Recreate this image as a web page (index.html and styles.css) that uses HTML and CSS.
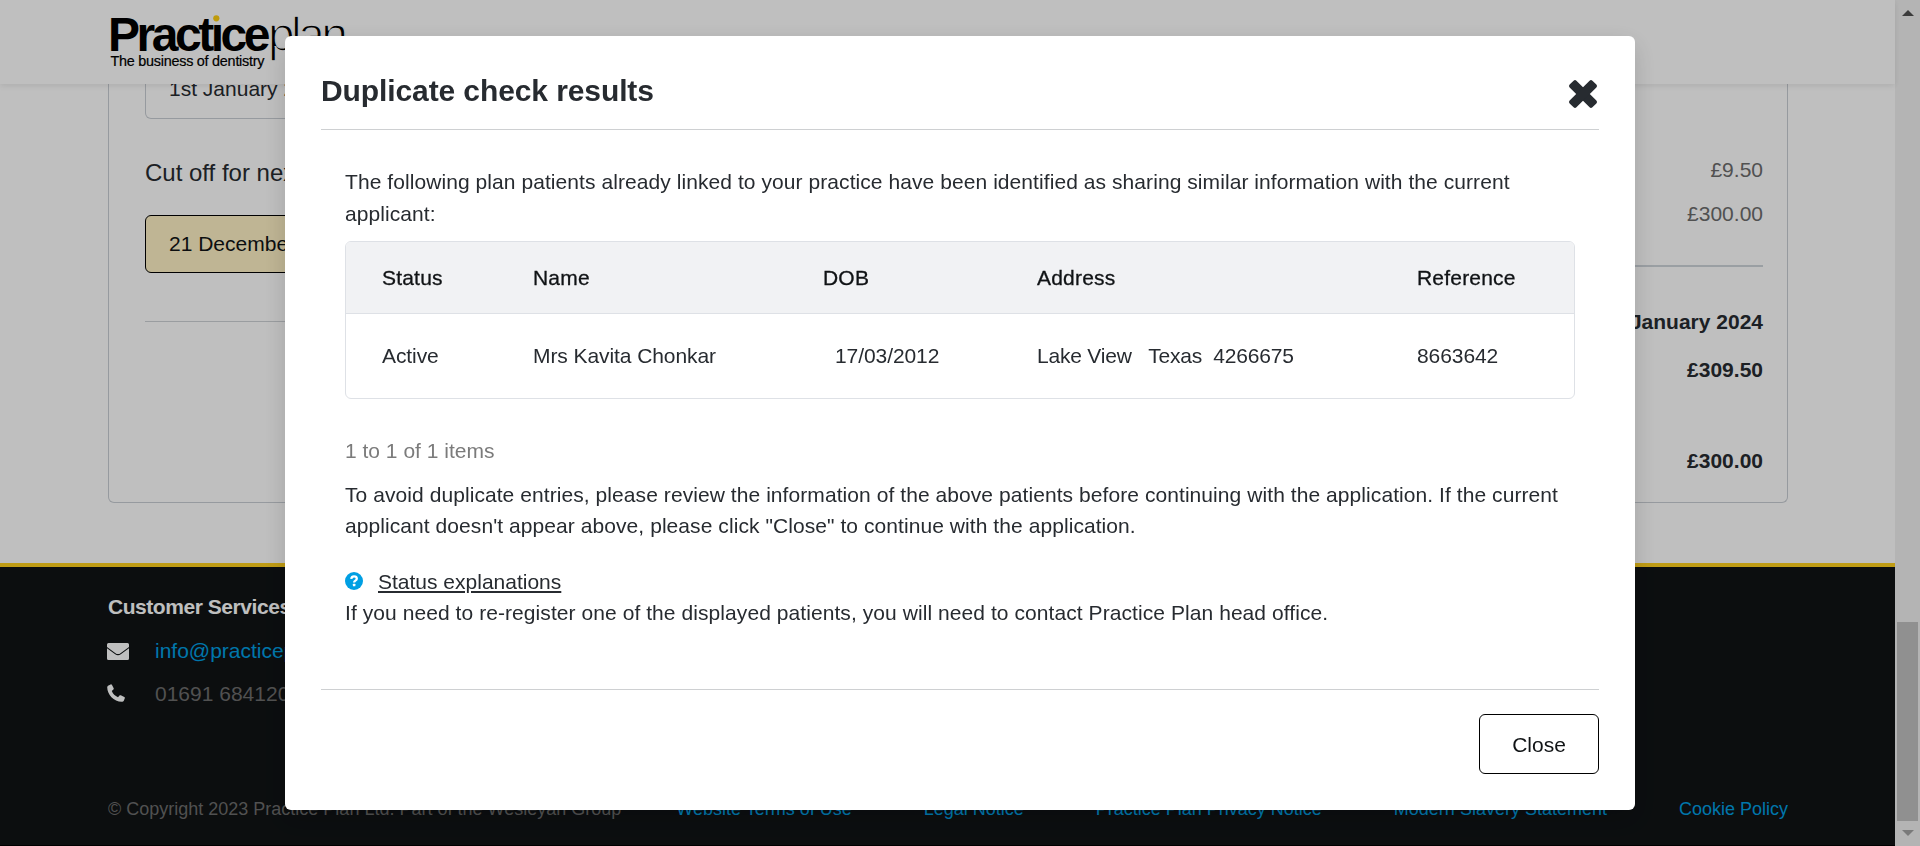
FILE: index.html
```html
<!DOCTYPE html>
<html lang="en">
<head>
<meta charset="utf-8">
<title>Duplicate check results</title>
<link rel="stylesheet" href="styles.css">
</head>
<body>
<div class="page">
  <div class="content">
    <header class="site-header">
      <svg class="logo" width="260" height="84" viewBox="0 0 260 84" role="img" aria-label="Practiceplan">
        <text class="logo-bold" x="0" y="51" textLength="162.500" lengthAdjust="spacing">Practıce</text>
        <circle cx="108.300" cy="18.300" r="3.100" fill="#ffcf10"/>
        <text class="logo-thin" x="160" y="51" textLength="80" lengthAdjust="spacing">plan</text>
        <text class="logo-tag" x="2.500" y="66.300" textLength="154" lengthAdjust="spacing">The business of dentistry</text>
      </svg>
    </header>
    <main class="main">
      <section class="card">
        <div class="dates">
          <div class="date-box">1st January 2024</div>
          <h2 class="dates-title">Cut off for next collection</h2>
          <div class="date-box date-box-active">21 December 2023</div>
          <hr class="rule">
        </div>
        <div class="totals">
          <div class="amount first">£9.50</div>
          <div class="amount second">£300.00</div>
          <hr class="rule-thick">
          <div class="strong month">1 January 2024</div>
          <div class="strong total">£309.50</div>
          <div class="strong">£300.00</div>
        </div>
      </section>
    </main>
    <footer class="footer">
      <h3 class="footer-title">Customer Services</h3>
      <div class="contact">
        <svg class="contact-icon mail-icon" width="22" height="17" viewBox="0 0 22 17"><path fill="#fff" d="M1.500 0h19A1.500 1.500 0 0 1 22 1.500V4l-8.500 6.200c-1.500 1.200-3.500 1.200-5 0L0 4V1.500A1.500 1.500 0 0 1 1.500 0zM0 5.200l8.200 6c1.800 1.300 3.800 1.300 5.600 0l8.200-6v10.300a1.500 1.500 0 0 1-1.500 1.500h-19A1.500 1.500 0 0 1 0 15.500z"/></svg>
        <a class="link">info@practiceplan.co.uk</a>
      </div>
      <div class="contact phone">
        <svg class="contact-icon" width="18" height="18" viewBox="0 0 18 18"><path fill="#fff" d="M1 1.700 3.600.4c.6-.3 1.100 0 1.400.5l1.700 3.400c.2.5.1 1-.3 1.300L4.800 7c1 2.700 3.300 5 6.200 6.200l1.500-1.700c.3-.4.900-.5 1.300-.2l3.500 1.700c.5.2.7.8.5 1.300l-1 2.400c-.4.8-1.200 1-2 1C6.600 17.700.3 10.500.2 3.200c0-.6.3-1.200.8-1.500z"/></svg>
        <span>01691 684120</span>
      </div>
      <div class="legal">
        <span>© Copyright 2023 Practice Plan Ltd. Part of the Wesleyan Group</span>
        <nav class="legal-links">
          <a class="link">Website Terms of Use</a>
          <a class="link">Legal Notice</a>
          <a class="link">Practice Plan Privacy Notice</a>
          <a class="link">Modern Slavery Statement</a>
          <a class="link">Cookie Policy</a>
        </nav>
      </div>
    </footer>
  </div>
  <div class="scrollbar">
    <i class="arrow arrow-up"></i>
    <i class="thumb"></i>
    <i class="arrow arrow-down"></i>
  </div>
</div>

<div class="backdrop">
  <div class="modal" role="dialog" aria-modal="true">
    <div class="modal-header">
      <h1 class="modal-title">Duplicate check results</h1>
      <svg class="modal-x" width="30" height="30" viewBox="0 0 30 30"><g fill="#272b30"><rect x="-1.100" y="10.200" width="32.200" height="9.600" rx="2" transform="rotate(45 15 15)"/><rect x="-1.100" y="10.200" width="32.200" height="9.600" rx="2" transform="rotate(-45 15 15)"/></g></svg>
    </div>
    <div class="modal-body">
      <p>The following plan patients already linked to your practice have been identified as sharing similar information with the current applicant:</p>
      <div class="table">
        <div class="row head"><span>Status</span><span>Name</span><span>DOB</span><span>Address</span><span>Reference</span></div>
        <div class="row"><span>Active</span><span>Mrs Kavita Chonkar</span><span class="dob">17/03/2012</span><span class="address">Lake View   Texas  4266675</span><span>8663642</span></div>
      </div>
      <p class="count">1 to 1 of 1 items</p>
      <p class="advice">To avoid duplicate entries, please review the information of the above patients before continuing with the application. If the current applicant doesn't appear above, please click "Close" to continue with the application.</p>
      <div class="explain">
        <svg width="18" height="18" viewBox="0 0 18 18"><circle cx="9" cy="9" r="9" fill="#009fe3"/><path d="M6.200 6.900C6.500 5.200 7.500 4.400 9 4.400c1.600 0 2.800.9 2.800 2.300 0 2-2.700 1.900-2.700 3.700" fill="none" stroke="#fff" stroke-width="2.300"/><rect x="7.900" y="11.700" width="2.500" height="2.500" rx=".5" fill="#fff"/></svg>
        <a class="explain-link">Status explanations</a>
      </div>
      <p>If you need to re-register one of the displayed patients, you will need to contact Practice Plan head office.</p>
    </div>
    <div class="modal-footer"><button class="close">Close</button></div>
  </div>
</div>
</body>
</html>
```

FILE: styles.css
```css
* { box-sizing: border-box; }
body, h1, h2, h3, p, hr { margin: 0; }
body {
  height: 846px;
  overflow: hidden;
  font: 21px/31.5px "Liberation Sans", Arial, sans-serif;
  color: #272b30;
  background: #fff;
}
.page { display: flex; height: 846px; }
.content { width: 1895px; display: flex; flex-direction: column; }

.site-header {
  height: 84px;
  padding-left: 108px;
  background: #fff;
  box-shadow: 0 2px 6px rgba(0, 0, 0, .09);
  z-index: 1;
}
.logo { display: block; }
.logo text { font-family: "Liberation Sans", Arial, sans-serif; fill: #000; }
.logo .logo-bold { font-size: 48px; font-weight: 700; }
.logo .logo-thin { font-size: 48px; stroke: #fff; stroke-width: 1.3px; }
.logo .logo-tag { font-size: 14.4px; stroke: #000; stroke-width: .2px; }

.main { height: 479px; padding: 0 107px 0 108px; }
.card {
  height: 419px;
  display: flex;
  justify-content: space-between;
  border: 1px solid #c9ced4;
  border-top: 0;
  border-radius: 0 0 6px 6px;
  padding: 0 24px 0 36px;
}
.dates { width: 500px; }
.date-box {
  height: 35px;
  padding: 0 23px;
  border: 1px solid #c9ced4;
  border-top: 0;
  border-radius: 0 0 6px 6px;
  line-height: 10px;
}
.dates-title { margin-top: 36px; font-size: 24px; line-height: 36px; font-weight: 400; }
.date-box-active {
  height: 58px;
  margin-top: 24px;
  border: 1px solid #000;
  border-radius: 6px;
  background: #fff2c6;
  color: #101315;
  line-height: 56px;
}
.date-box-active + .rule { margin-top: 48px; }
.rule { border: 0; border-top: 1px solid #ced2d6; }
.totals { width: 600px; text-align: right; }
.amount { color: #6c6c6c; }
.first { margin-top: 70px; }
.second { margin-top: 12.5px; }
.rule-thick { margin-top: 35px; border: 0; border-top: 2px solid #ced4da; }
.strong { font-weight: 700; }
.month { margin-top: 39px; }
.total { margin: 16.5px 0 59.5px; }

.footer {
  height: 283px;
  padding: 24px 107px 0 108px;
  border-top: 4px solid #ffd01d;
  border-bottom: 1px solid #000;
  background: #101315;
  color: #6c6c6c;
}
.footer-title { color: #fff; font-size: 21px; letter-spacing: -.45px; }
.contact { display: flex; align-items: center; margin-top: 12px; }
.contact-icon { margin: 0 26px 0 -1px; }
.mail-icon { margin-top: 3px; }
.phone { margin-top: 11.5px; }
.phone .contact-icon { margin-right: 30px; }
.link { color: #009fe3; }
.legal {
  display: flex;
  justify-content: space-between;
  margin-top: 87px;
  font-size: 18px;
  line-height: 27px;
  white-space: nowrap;
}
.legal-links { display: flex; gap: 72px; }

.scrollbar {
  width: 25px;
  padding: 8px 2px 10px;
  display: flex;
  flex-direction: column;
  align-items: center;
  background: #f1f1f1;
}
.arrow { border: 6px solid transparent; }
.arrow-up { border-top: 0; border-bottom-color: #505050; margin-top: 2px; }
.arrow-down { border-bottom: 0; border-top-color: #a3a3a3; margin-top: 9px; }
.thumb { width: 21px; height: 199px; margin-top: auto; background: #c1c1c1; }

.backdrop {
  position: fixed;
  inset: 0;
  z-index: 2;
  padding: 36px 285px;
  background: rgba(0, 0, 0, .25);
}
.modal {
  width: 1350px;
  height: 774px;
  padding: 0 36px;
  border-radius: 6px;
  background: #fff;
  box-shadow: 0 8px 24px rgba(0, 0, 0, .15);
}
.modal-header {
  height: 94px;
  display: flex;
  justify-content: space-between;
  align-items: flex-start;
  padding-top: 32px;
  border-bottom: 1px solid #ced0d2;
}
.modal-title { font-size: 30px; line-height: 45px; letter-spacing: -.1px; }
.modal-x { margin: 11px 1px 0 0; }
.modal-body { height: 560px; padding: 36px 24px 0; border-bottom: 1px solid #ced0d2; }
.modal-body p { letter-spacing: .07px; }
.table { margin-top: 12px; border: 1px solid #dee1e6; border-radius: 6px; overflow: hidden; }
.row {
  display: grid;
  grid-template-columns: 151px 290px 214px 380px 1fr;
  padding-left: 36px;
  line-height: 84px;
  height: 84px;
  letter-spacing: -.08px;
}
.head {
  height: 72px;
  line-height: 72px;
  color: #101315;
  background: #f1f2f4;
  border-bottom: 1px solid #dee1e6;
  -webkit-text-stroke: .3px #101315;
  letter-spacing: .2px;
}
.dob { padding-left: 12px; }
.address { white-space: pre; letter-spacing: -.2px; }
.modal-body .count { margin-top: 36px; color: #7b7b7b; letter-spacing: 0; }
.advice { margin-top: 12px; }
.explain { display: flex; align-items: center; gap: 15px; margin-top: 24px; }
.explain-link { text-decoration: underline; text-decoration-thickness: 2px; text-underline-offset: 2px; }
.modal-footer { display: flex; justify-content: flex-end; padding-top: 24px; }
.close {
  width: 120px;
  height: 60px;
  padding-top: 3px;
  border: 1px solid #000;
  border-radius: 6px;
  background: #fff;
  color: #101315;
  font: inherit;
}
```
